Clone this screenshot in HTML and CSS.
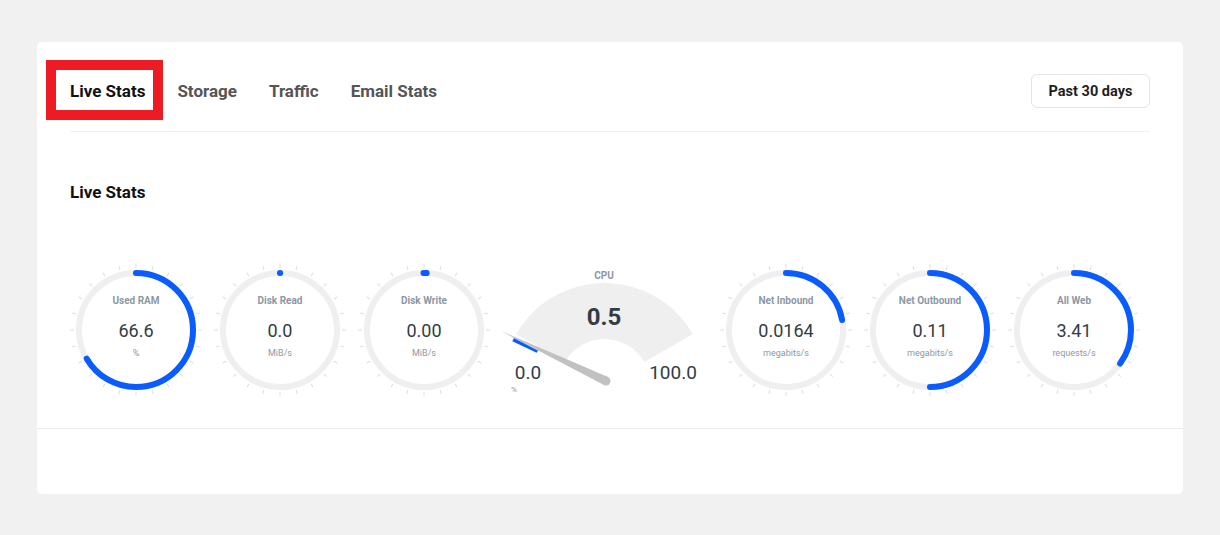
FILE: index.html
```html
<!DOCTYPE html>
<html lang="en">
<head>
<meta charset="utf-8">
<title>Live Stats</title>
<link rel="stylesheet" href="styles.css">
</head>
<body>
<svg class="defs" width="0" height="0" aria-hidden="true">
  <defs>
    <g id="ticks" stroke="#dedede" stroke-width="1">
      <line x1="0" y1="-62" x2="0" y2="-66" transform="rotate(0)"/>
      <line x1="0" y1="-62" x2="0" y2="-66" transform="rotate(15)"/>
      <line x1="0" y1="-62" x2="0" y2="-66" transform="rotate(30)"/>
      <line x1="0" y1="-62" x2="0" y2="-66" transform="rotate(45)"/>
      <line x1="0" y1="-62" x2="0" y2="-66" transform="rotate(60)"/>
      <line x1="0" y1="-62" x2="0" y2="-66" transform="rotate(75)"/>
      <line x1="0" y1="-62" x2="0" y2="-66" transform="rotate(90)"/>
      <line x1="0" y1="-62" x2="0" y2="-66" transform="rotate(105)"/>
      <line x1="0" y1="-62" x2="0" y2="-66" transform="rotate(120)"/>
      <line x1="0" y1="-62" x2="0" y2="-66" transform="rotate(135)"/>
      <line x1="0" y1="-62" x2="0" y2="-66" transform="rotate(150)"/>
      <line x1="0" y1="-62" x2="0" y2="-66" transform="rotate(165)"/>
      <line x1="0" y1="-62" x2="0" y2="-66" transform="rotate(180)"/>
      <line x1="0" y1="-62" x2="0" y2="-66" transform="rotate(195)"/>
      <line x1="0" y1="-62" x2="0" y2="-66" transform="rotate(210)"/>
      <line x1="0" y1="-62" x2="0" y2="-66" transform="rotate(225)"/>
      <line x1="0" y1="-62" x2="0" y2="-66" transform="rotate(240)"/>
      <line x1="0" y1="-62" x2="0" y2="-66" transform="rotate(255)"/>
      <line x1="0" y1="-62" x2="0" y2="-66" transform="rotate(270)"/>
      <line x1="0" y1="-62" x2="0" y2="-66" transform="rotate(285)"/>
      <line x1="0" y1="-62" x2="0" y2="-66" transform="rotate(300)"/>
      <line x1="0" y1="-62" x2="0" y2="-66" transform="rotate(315)"/>
      <line x1="0" y1="-62" x2="0" y2="-66" transform="rotate(330)"/>
      <line x1="0" y1="-62" x2="0" y2="-66" transform="rotate(345)"/>
    </g>
  </defs>
</svg>

<div class="page">
  <div class="card">
    <div class="header">
      <nav class="tabs">
        <a class="tab active">Live Stats</a>
        <a class="tab">Storage</a>
        <a class="tab">Traffic</a>
        <a class="tab">Email Stats</a>
      </nav>
      <button class="range">Past 30 days</button>
    </div>

    <div class="section">
      <h2 class="heading">Live Stats</h2>
      <div class="gauges">
        <div class="gauge">
          <svg class="ring" width="144" height="140" viewBox="0 0 144 140">
            <use href="#ticks" transform="translate(72 68)"/>
            <circle class="track" cx="72" cy="68" r="57"/>
            <circle class="arc" cx="72" cy="68" r="57" pathLength="100" stroke-dasharray="66.6 200" transform="rotate(-90 72 68)"/>
          </svg>
          <div class="readout">
            <span class="label">Used RAM</span>
            <span class="value">66.6</span>
            <span class="unit">%</span>
          </div>
        </div>

        <div class="gauge">
          <svg class="ring" width="144" height="140" viewBox="0 0 144 140">
            <use href="#ticks" transform="translate(72 68)"/>
            <circle class="track" cx="72" cy="68" r="57"/>
            <circle class="arc" cx="72" cy="68" r="57" pathLength="100" stroke-dasharray="0.05 200" transform="rotate(-90 72 68)"/>
          </svg>
          <div class="readout">
            <span class="label">Disk Read</span>
            <span class="value">0.0</span>
            <span class="unit">MiB/s</span>
          </div>
        </div>

        <div class="gauge">
          <svg class="ring" width="144" height="140" viewBox="0 0 144 140">
            <use href="#ticks" transform="translate(72 68)"/>
            <circle class="track" cx="72" cy="68" r="57"/>
            <circle class="arc" cx="72" cy="68" r="57" pathLength="100" stroke-dasharray="0.9 200" transform="rotate(-90.5 72 68)"/>
          </svg>
          <div class="readout">
            <span class="label">Disk Write</span>
            <span class="value">0.00</span>
            <span class="unit">MiB/s</span>
          </div>
        </div>

        <div class="cpu">
          <svg class="dial" width="218" height="140" viewBox="0 0 218 140">
            <path class="band" d="M 20.17 72 A 102 102 0 0 1 196.83 72 L 148.34 100 A 46 46 0 0 0 68.66 100 Z"/>
            <polygon class="fill" points="18.0,76.0 16.3,79.3 40.7,90.8 42.0,88.4"/>
            <polygon class="needle" points="5,69 112,115 108,123"/>
            <circle class="needle" cx="110" cy="119" r="4.5"/>
            <text class="cpu-title" x="108" y="13">CPU</text>
            <text class="cpu-value" x="108" y="55">0.5</text>
            <text class="cpu-end" x="32" y="110">0.0</text>
            <text class="cpu-end" x="177" y="110">100.0</text>
            <text class="cpu-unit" x="18" y="127">%</text>
          </svg>
        </div>

        <div class="gauge">
          <svg class="ring" width="144" height="140" viewBox="0 0 144 140">
            <use href="#ticks" transform="translate(72 68)"/>
            <circle class="track" cx="72" cy="68" r="57"/>
            <circle class="arc" cx="72" cy="68" r="57" pathLength="100" stroke-dasharray="22.2 200" transform="rotate(-90 72 68)"/>
          </svg>
          <div class="readout">
            <span class="label">Net Inbound</span>
            <span class="value">0.0164</span>
            <span class="unit">megabits/s</span>
          </div>
        </div>

        <div class="gauge">
          <svg class="ring" width="144" height="140" viewBox="0 0 144 140">
            <use href="#ticks" transform="translate(72 68)"/>
            <circle class="track" cx="72" cy="68" r="57"/>
            <circle class="arc" cx="72" cy="68" r="57" pathLength="100" stroke-dasharray="50 200" transform="rotate(-90 72 68)"/>
          </svg>
          <div class="readout">
            <span class="label">Net Outbound</span>
            <span class="value">0.11</span>
            <span class="unit">megabits/s</span>
          </div>
        </div>

        <div class="gauge">
          <svg class="ring" width="144" height="140" viewBox="0 0 144 140">
            <use href="#ticks" transform="translate(72 68)"/>
            <circle class="track" cx="72" cy="68" r="57"/>
            <circle class="arc" cx="72" cy="68" r="57" pathLength="100" stroke-dasharray="35 200" transform="rotate(-90 72 68)"/>
          </svg>
          <div class="readout">
            <span class="label">All Web</span>
            <span class="value">3.41</span>
            <span class="unit">requests/s</span>
          </div>
        </div>
      </div>
    </div>

    <div class="footer"></div>

    <div class="highlight" aria-hidden="true"></div>
  </div>
</div>
</body>
</html>
```

FILE: styles.css
```css
* { box-sizing: border-box; }

html, body {
  margin: 0;
  background: #f1f1f1;
  font-family: Roboto, "Liberation Sans", Arial, sans-serif;
}

.defs {
  position: absolute;
  width: 0;
  height: 0;
  overflow: hidden;
}

.page {
  padding: 42px 37px;
}

.card {
  position: relative;
  background: #ffffff;
  border-radius: 5px;
}

.header {
  margin: 0 33px;
  padding: 32px 0 23px;
  border-bottom: 1px solid #efefef;
  display: flex;
  justify-content: space-between;
  align-items: center;
}

.tabs {
  display: flex;
  gap: 32px;
  align-items: center;
}

.tab {
  font-size: 17px;
  font-weight: 700;
  color: #555555;
  line-height: 20px;
  cursor: pointer;
}

.tab.active {
  color: #111111;
}

.range {
  height: 34px;
  width: 119px;
  padding: 0;
  border: 1px solid #e4e4e4;
  border-radius: 6px;
  background: #ffffff;
  font-family: inherit;
  font-size: 14.5px;
  font-weight: 700;
  color: #1e1e1e;
}

.section {
  padding: 50px 33px 26px;
  border-bottom: 1px solid #ececec;
}

.heading {
  margin: 0;
  font-size: 17px;
  line-height: 20px;
  font-weight: 700;
  color: #111111;
}

.gauges {
  margin: 60px 0 0 -6px;
  display: flex;
  height: 140px;
}

.gauge {
  width: 144px;
  flex: none;
  display: grid;
}

.gauge > * {
  grid-area: 1 / 1;
}

.ring {
  display: block;
}

.track {
  fill: none;
  stroke: #efefef;
  stroke-width: 6;
}

.arc {
  fill: none;
  stroke: #0a5cff;
  stroke-width: 6;
  stroke-linecap: round;
}

.readout {
  padding-top: 32px;
  display: flex;
  flex-direction: column;
  align-items: center;
  text-align: center;
}

.label {
  font-size: 10px;
  line-height: 14px;
  font-weight: 700;
  color: #8b98a6;
}

.value {
  margin-top: 12px;
  font-size: 18px;
  line-height: 22px;
  color: #323c46;
}

.unit {
  margin-top: 5px;
  font-size: 9px;
  line-height: 12px;
  color: #8b98a6;
}

.cpu {
  width: 218px;
  flex: none;
}

.dial {
  display: block;
}

.band {
  fill: #efefef;
}

.fill {
  fill: #0a5cff;
}

.needle {
  fill: #c1c1c1;
}

.dial text {
  font-family: Roboto, "Liberation Sans", Arial, sans-serif;
  text-anchor: middle;
  dominant-baseline: central;
}

.cpu-title {
  font-size: 10px;
  font-weight: 700;
  fill: #8b98a6;
}

.cpu-value {
  font-size: 24px;
  font-weight: 700;
  fill: #323c46;
}

.cpu-end {
  font-size: 19px;
  fill: #323c46;
}

.cpu-unit {
  font-size: 8px;
  fill: #8b98a6;
}

.footer {
  height: 65px;
}

.highlight {
  position: absolute;
  left: 9px;
  top: 18px;
  width: 117px;
  height: 60px;
  border: 10px solid #ed1c24;
  pointer-events: none;
}
```
